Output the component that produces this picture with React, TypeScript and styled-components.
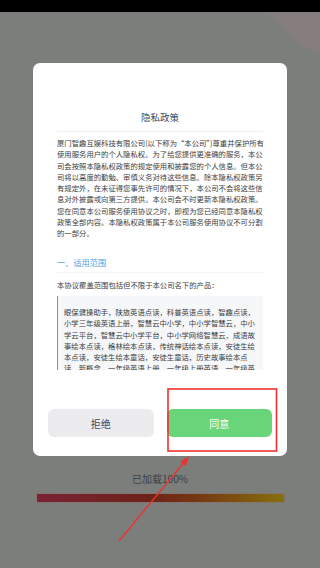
import React from "react";
import styled, { createGlobalStyle } from "styled-components";

const GlobalStyle = createGlobalStyle`
  html, body {
    margin: 0;
    padding: 0;
    background: #7c7e7b;
  }
  body {
    font-family: "Noto Sans CJK SC", "Noto Sans", sans-serif;
  }
`;

const Page = styled.div`
  position: relative;
  width: 320px;
  height: 568px;
  overflow: hidden;
  background: #7c7e7b;
  display: flex;
  flex-direction: column;
  align-items: center;
`;

const StatusBar = styled.div`
  align-self: stretch;
  height: 12px;
  background: #000;
  position: relative;
  z-index: 2;
`;

const Blob = styled.div`
  position: absolute;
  left: 251px;
  top: -164px;
  width: 228px;
  height: 228px;
  border-radius: 50%;
  background: #857d7e;
`;

const Modal = styled.div`
  position: relative;
  margin-top: 51px;
  width: 254px;
  height: 393px;
  box-sizing: border-box;
  padding: 47px 15px 19px;
  background: #fff;
  border-radius: 7px;
  display: flex;
  flex-direction: column;
`;

const Title = styled.div`
  text-align: center;
  font-size: 9.5px;
  line-height: 14px;
  color: #3b4a60;
  margin: 0 9px;
  padding-bottom: 7px;
  border-bottom: 1px solid #f0f0f0;
`;

const Scroll = styled.div`
  height: 233px;
  overflow: hidden;
  padding: 0 9px;
  margin-top: 5px;
`;

const Para = styled.div`
  font-size: 7.35px;
  line-height: 11.3px;
  color: #3d3d3d;
  white-space: nowrap;
`;

const Line = styled.span`
  display: block;
`;

const Heading = styled.div`
  margin-top: 17px;
  font-size: 8.2px;
  line-height: 12px;
  color: #4ba2e6;
  padding-bottom: 4px;
  border-bottom: 1px solid #f5f5f5;
`;

const Intro = styled(Para)`
  margin-top: 6px;
`;

const Quote = styled.div`
  margin-top: 6px;
  padding: 10px 7px 10px 6px;
  background: #f6f7f9;
  border-left: 1.5px solid #4a9fe0;
  font-size: 7.35px;
  line-height: 11.3px;
  color: #3d3d3d;
  white-space: nowrap;
`;

const Buttons = styled.div`
  margin-top: auto;
  display: flex;
  gap: 13px;
`;

const Button = styled.button<{ $primary?: boolean }>`
  flex: 1;
  height: 28px;
  border: none;
  border-radius: 6px;
  font-family: inherit;
  font-size: 10px;
  background: ${(p) => (p.$primary ? "#69d57a" : "#ececee")};
  color: ${(p) => (p.$primary ? "#ffffff" : "#3c4a6a")};
  padding: 0;
`;

const Loading = styled.div`
  margin-top: 16px;
  font-size: 10px;
  line-height: 14px;
  color: #3a3f4a;
`;

const Bar = styled.div`
  margin-top: 8px;
  width: 247px;
  height: 8px;
  background: linear-gradient(90deg, #7a2334 0%, #6d2219 45%, #763812 65%, #85700f 100%);
  box-shadow: 0 0 0 0.5px #8a6a6a;
`;

const Annotation = styled.svg`
  position: absolute;
  left: 0;
  top: 0;
  pointer-events: none;
`;

const bodyLines = [
  "厦门智趣互娱科技有限公司(以下称为“本公司”)尊重并保护所有",
  "使用服务用户的个人隐私权。为了给您提供更准确的服务，本公",
  "司会按照本隐私权政策的规定使用和披露您的个人信息。但本公",
  "司将以高度的勤勉、审慎义务对待这些信息。除本隐私权政策另",
  "有规定外，在未征得您事先许可的情况下，本公司不会将这些信",
  "息对外披露或向第三方提供。本公司会不时更新本隐私权政策。",
  "您在同意本公司服务使用协议之时，即视为您已经同意本隐私权",
  "政策全部内容。本隐私权政策属于本公司服务使用协议不可分割",
  "的一部分。",
];

const productLines = [
  "眼保健操助手，陕旅英语点读，科普英语点读，智趣点读，",
  "小学三年级英语上册，智慧云中小学，中小学智慧云，中小",
  "学云平台，智慧云中小学平台，中小学网络智慧云，成语故",
  "事绘本点读，格林绘本点读，传统神话绘本点读，安徒生绘",
  "本点读，安徒生绘本童话，安徒生童话，历史故事绘本点",
  "读，新概念，一年级英语上册，一年级上册英语，一年级英",
];

export default function App() {
  return (
    <>
      <GlobalStyle />
      <Page>
        <StatusBar />
        <Blob />
        <Modal>
          <Title>隐私政策</Title>
          <Scroll>
            <Para>
              {bodyLines.map((l) => (
                <Line key={l}>{l}</Line>
              ))}
            </Para>
            <Heading>一、适用范围</Heading>
            <Intro>本协议覆盖范围包括但不限于本公司名下的产品：</Intro>
            <Quote>
              {productLines.map((l) => (
                <Line key={l}>{l}</Line>
              ))}
            </Quote>
          </Scroll>
          <Buttons>
            <Button>拒绝</Button>
            <Button $primary>同意</Button>
          </Buttons>
        </Modal>
        <Loading>已加载100%</Loading>
        <Bar />
        <Annotation width="320" height="568" viewBox="0 0 320 568">
          <rect x="168" y="389" width="108.5" height="62" fill="none" stroke="#ea3232" strokeWidth="1.6" />
          <line x1="119" y1="541" x2="186" y2="460" stroke="#ea3232" strokeWidth="1.4" />
          <polygon points="189,456 180.5,461.5 186,466" fill="#ea3232" />
        </Annotation>
      </Page>
    </>
  );
}
